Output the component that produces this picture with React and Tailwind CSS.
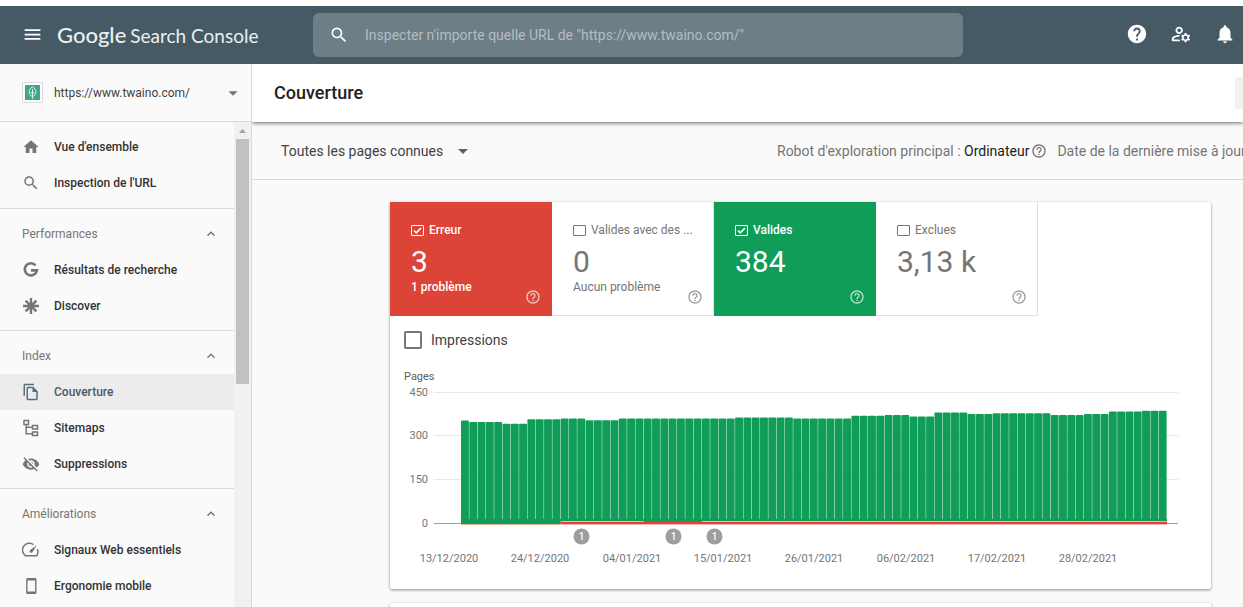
import {
  MdArrowDropDown,
  MdHelp,
  MdHelpOutline,
  MdHome,
  MdKeyboardArrowUp,
  MdMenu,
  MdNotifications,
  MdOutlineFileCopy,
  MdOutlineManageAccounts,
  MdSearch,
  MdVisibilityOff,
} from 'react-icons/md'

// Icons the Material set does not carry in this shape.
function GoogleG({ className }) {
  return (
    <svg viewBox="0 0 18 18" className={className} fill="none" stroke="currentColor" strokeWidth="2.6" aria-hidden="true">
      <path d="M13.6 4.4A6.1 6.1 0 1 0 14.9 9.4H9" />
    </svg>
  )
}

function Asterisk({ className }) {
  return (
    <svg viewBox="0 0 18 18" className={className} stroke="currentColor" strokeWidth="2.4" aria-hidden="true">
      <path d="M9 1v16M1 9h16M3.6 3.6l10.8 10.8M14.4 3.6L3.6 14.4" />
    </svg>
  )
}

function Sitemap({ className }) {
  return (
    <svg viewBox="0 0 18 18" className={className} fill="none" stroke="currentColor" strokeWidth="1.5" aria-hidden="true">
      <path d="M2 1.5h4.5v4H2zM10.5 6.5h5v3.5h-5zM10.5 13h5v3.5h-5zM4.2 5.5v9.2h6.3M4.2 8.3h6.3" />
    </svg>
  )
}

function Gauge({ className }) {
  return (
    <svg viewBox="0 0 18 18" className={className} fill="none" stroke="currentColor" strokeWidth="1.5" aria-hidden="true">
      <path d="M11.5 3.6A6.6 6.6 0 0 0 3.3 14.7h11.4a6.6 6.6 0 0 0 .6-6.6" />
      <path d="M14.8 4.2L10.4 11.2a1.6 1.6 0 1 1-2.3-2.3z" fill="currentColor" stroke="none" />
    </svg>
  )
}

function Phone({ className }) {
  return (
    <svg viewBox="0 0 18 18" className={className} fill="none" stroke="currentColor" aria-hidden="true">
      <rect x="4.8" y="1.8" width="9" height="14.4" rx="1" strokeWidth="1.4" />
      <path d="M4.8 2.6h9M4.8 15.4h9" strokeWidth="2" />
    </svg>
  )
}

const SECTIONS = [
  {
    items: [
      { label: "Vue d'ensemble", icon: MdHome },
      { label: "Inspection de l'URL", icon: MdSearch },
    ],
  },
  {
    title: 'Performances',
    items: [
      { label: 'Résultats de recherche', icon: GoogleG },
      { label: 'Discover', icon: Asterisk },
    ],
  },
  {
    title: 'Index',
    items: [
      { label: 'Couverture', icon: MdOutlineFileCopy, active: true },
      { label: 'Sitemaps', icon: Sitemap },
      { label: 'Suppressions', icon: MdVisibilityOff },
    ],
  },
  {
    title: 'Améliorations',
    items: [
      { label: 'Signaux Web essentiels', icon: Gauge },
      { label: 'Ergonomie mobile', icon: Phone },
    ],
  },
]

const STATUSES = [
  { id: 'error', label: 'Erreur', value: '3', note: '1 problème', checked: true, tone: 'border-[#db4437] bg-[#db4437] text-white' },
  { id: 'warning', label: 'Valides avec des ...', value: '0', note: 'Aucun problème', checked: false },
  { id: 'valid', label: 'Valides', value: '384', checked: true, tone: 'border-[#0f9d58] bg-[#0f9d58] text-white' },
  { id: 'excluded', label: 'Exclues', value: '3,13 k', checked: false },
]

// [number of days, valid pages]
const RUNS = [
  [1, 352], [4, 347], [3, 341], [4, 356], [3, 359], [4, 353], [14, 359],
  [7, 362], [7, 359], [4, 368], [3, 371], [3, 366], [4, 380], [3, 374],
  [7, 377], [4, 371], [3, 374], [4, 383], [3, 386],
]
const DAYS = RUNS.flatMap(([count, pages]) => Array(count).fill(pages))
const TICKS = [450, 300, 150, 0]
const DATES = ['13/12/2020', '24/12/2020', '04/01/2021', '15/01/2021', '26/01/2021', '06/02/2021', '17/02/2021', '28/02/2021']
const MARKERS = [191, 283, 324]

const BASE = 160
const LEFT = 71
const STEP = 706 / DAYS.length
const toY = (pages) => BASE - (pages * 131) / 450

function Chart() {
  return (
    <svg viewBox="0 0 821 226" className="block w-full text-[11px]" role="img" aria-label="Pages">
      <text x="14" y="17" fill="#616161">Pages</text>
      {TICKS.map((tick) => (
        <g key={tick}>
          <text x="38" y={Math.floor(toY(tick)) + 4} textAnchor="end" fill="#757575">{tick}</text>
          <rect x="44" y={Math.floor(toY(tick))} width="744" height="1" fill={tick ? '#e8e8e8' : '#9e9e9e'} />
        </g>
      ))}
      {DAYS.map((pages, i) => {
        const x = LEFT + i * STEP
        return (
          <rect key={i} x={x} y={toY(pages)} width={STEP - 0.4} height={BASE - toY(pages)} rx="1" fill="#0f9d58" />
        )
      })}
      <rect x={LEFT} y={BASE - 4} width={85 * STEP} height="4" fill="#0f9d58" />
      {/* Error pages: none, then two, with a bump to three in mid January */}
      <rect x={LEFT} y={BASE} width={12 * STEP} height="1" fill="#7a6a3c" />
      <rect x={LEFT} y={BASE + 1} width={12 * STEP} height="1" fill="#e3b49c" />
      <rect x={LEFT + 12 * STEP} y={BASE - 2} width={73 * STEP} height="4" fill="#f4b5af" />
      <rect x={LEFT + 12 * STEP} y={BASE - 1} width={73 * STEP} height="2" fill="#db4437" />
      <rect x={LEFT + 22 * STEP} y={BASE - 2} width={7 * STEP} height="3" fill="#db4437" />
      {MARKERS.map((x) => (
        <g key={x}>
          <circle cx={x + 0.5} cy="173.5" r="8" fill="#9e9e9e" />
          <text x={x + 0.5} y="177" textAnchor="middle" fill="#fff" className="text-[10px] font-medium">1</text>
        </g>
      ))}
      {DATES.map((date, i) => (
        <text key={date} x={59 + Math.round(i * 91.3)} y="199" textAnchor="middle" fill="#757575">{date}</text>
      ))}
    </svg>
  )
}

function NavItem({ label, icon: Icon, active }) {
  return (
    <li>
      <a
        href="#"
        aria-current={active ? 'page' : undefined}
        className={[
          'flex h-9 items-center gap-3.5 pl-[22px] text-xs font-medium',
          active ? 'bg-[#ececec] text-[#455a64]' : 'text-[#333]',
        ].join(' ')}
      >
        <Icon className={active ? 'size-[18px] text-[#546e7a]' : 'size-[18px] text-[#757575]'} />
        {label}
      </a>
    </li>
  )
}

function StatusCard({ id, label, value, note, checked, tone }) {
  return (
    <div
      className={[
        'relative h-[114px] w-[162px] border-r border-b pt-5 pl-[21px]',
        tone ?? 'border-[#e0e0e0] text-[#757575]',
      ].join(' ')}
    >
      <div className="flex h-4 items-center gap-[5px]">
        <span className="relative flex">
          <input
            id={id}
            type="checkbox"
            defaultChecked={checked}
            className="h-[11px] w-[13px] appearance-none rounded-[1px] border border-current"
          />
          {checked && (
            <svg viewBox="0 0 13 11" className="pointer-events-none absolute inset-0" fill="none" stroke="currentColor" strokeWidth="1.7" aria-hidden="true">
              <path d="M3 5.5l2.3 2.3L10 3" />
            </svg>
          )}
        </span>
        <label htmlFor={id} className={checked ? 'text-xs font-medium' : 'text-xs whitespace-nowrap'}>
          {label}
        </label>
      </div>
      <p className="mt-1.5 text-[30px] leading-9">{value}</p>
      {note && <p className={checked ? 'text-xs leading-[14px] font-medium' : 'text-xs leading-[14px]'}>{note}</p>}
      <MdHelpOutline className="absolute right-2.5 bottom-2.5 size-4 opacity-70" />
    </div>
  )
}

export default function App() {
  return (
    <div className="flex h-screen flex-col overflow-hidden bg-[#fafafa] font-[Roboto,sans-serif] text-[#212121]">
      {/* Top bar */}
      <header className="flex h-16 shrink-0 items-center border-t-[6px] border-white bg-[#455a64] text-white">
        <div className="flex w-[313px] shrink-0 items-center pb-0.5 pl-[22px]">
          <button type="button" aria-label="Menu">
            <MdMenu className="size-[21px]" />
          </button>
          <a href="#" className="ml-[14px] flex items-baseline gap-1 font-[Lato,sans-serif] text-[19px] text-[#eceff1]">
            <span className="text-[22px] font-medium">Google</span>
            <span>Search Console</span>
          </a>
        </div>
        <label className="flex h-11 w-[650px] shrink-0 items-center gap-4 rounded-md bg-[#6d7e86] pl-4">
          <MdSearch className="size-5" />
          <input
            type="text"
            aria-label="Inspecter une URL"
            placeholder={'Inspecter n\'importe quelle URL de "https://www.twaino.com/"'}
            className="flex-1 text-sm outline-none placeholder:text-[#b4bdc2]"
          />
        </label>
        <div className="ml-auto flex items-center gap-[22px] pr-[7px] pb-0.5">
          <button type="button" aria-label="Aide"><MdHelp className="size-[22px]" /></button>
          <button type="button" aria-label="Utilisateurs"><MdOutlineManageAccounts className="size-[22px]" /></button>
          <button type="button" aria-label="Notifications"><MdNotifications className="size-[22px]" /></button>
        </div>
      </header>

      <div className="flex min-h-0 flex-1">
        {/* Sidebar */}
        <aside className="flex w-[252px] shrink-0 flex-col border-r border-[#dadada]">
          <button type="button" className="flex h-[58px] shrink-0 items-center border-b border-[#dadada] pr-[7px] pl-[22px] text-xs text-[#424242]">
            <span className="flex size-[21px] items-center justify-center rounded-[1px] border border-[#dadada] bg-white">
              <svg viewBox="0 0 15 15" className="size-[15px]" fill="none" stroke="#d5f0e8" aria-hidden="true">
                <rect width="15" height="15" fill="#3fa58c" stroke="none" />
                <path d="M7.5 1.5C3 5 3 10 7.5 11.5C12 10 12 5 7.5 1.5zM7.5 4v10M5.5 7l2 2l2-2" />
              </svg>
            </span>
            <span className="ml-[11px]">https://www.twaino.com/</span>
            <MdArrowDropDown className="ml-auto size-[22px] text-[#757575]" />
          </button>
          <div className="flex min-h-0 flex-1">
            <nav className="flex-1 overflow-hidden" aria-label="Navigation">
              {SECTIONS.map((section, i) => (
                <section
                  key={i}
                  className={section.title ? 'border-b border-[#dadada] pt-[7px] pb-1.5' : 'border-b border-[#dadada] py-[7px]'}
                >
                  {section.title && (
                    <button type="button" className="flex h-9 w-full items-center justify-between pr-[15px] pl-[22px] text-xs text-[#757575]">
                      {section.title}
                      <MdKeyboardArrowUp className="size-4" />
                    </button>
                  )}
                  <ul>
                    {section.items.map((item) => (
                      <NavItem key={item.label} {...item} />
                    ))}
                  </ul>
                </section>
              ))}
            </nav>
            {/* Scrollbar */}
            <div className="flex w-[17px] flex-col items-center bg-[#f1f1f1]" aria-hidden="true">
              <svg viewBox="0 0 17 17" className="size-[17px]" fill="#a3a3a3">
                <path d="M5 11l3.5-4l3.5 4z" />
              </svg>
              <div className="h-[245px] w-[13px] bg-[#c1c1c1]" />
            </div>
          </div>
        </aside>

        {/* Report */}
        <main className="flex min-w-0 flex-1 flex-col overflow-hidden">
          <div className="z-10 flex h-[58px] shrink-0 items-center justify-between bg-white pl-[22px] shadow-[0_1px_4px_rgba(0,0,0,0.6)]">
            <h1 className="text-lg font-medium">Couverture</h1>
            <button type="button" aria-label="Exporter" className="h-8 w-2 rounded-l-xs bg-[#f1f1f1]" />
          </div>
          <div className="flex h-[58px] shrink-0 items-center border-b border-[#dadada] pl-[29px] text-sm whitespace-nowrap">
            <button type="button" className="flex items-center gap-2 text-[#424242]">
              Toutes les pages connues
              <MdArrowDropDown className="size-6 text-[#616161]" />
            </button>
            <div className="ml-auto flex w-[466px] shrink-0 items-center text-[#757575]">
              <span>Robot d'exploration principal : <span className="text-[#212121]">Ordinateur</span></span>
              <MdHelpOutline className="mr-2.5 ml-0.5 size-4 shrink-0" />
              <span>Date de la dernière mise à jour</span>
            </div>
          </div>

          <div className="pr-8 pl-[138px]">
            <div className="mt-[22px] rounded-xs bg-white shadow-[0_1px_3px_rgba(0,0,0,0.45)]">
              <div className="flex">
                {STATUSES.map((status) => (
                  <StatusCard key={status.id} {...status} />
                ))}
              </div>
              <div className="flex h-[47px] items-center gap-[9px] pl-[14px] text-sm text-[#424242]">
                <input id="impressions" type="checkbox" className="size-[18px] appearance-none rounded-xs border-2 border-[#757575]" />
                <label htmlFor="impressions">Impressions</label>
              </div>
              <Chart />
            </div>
            <div className="mt-[14px] h-16 rounded-xs bg-white shadow-[0_1px_3px_rgba(0,0,0,0.45)]" />
          </div>
        </main>
      </div>
    </div>
  )
}
